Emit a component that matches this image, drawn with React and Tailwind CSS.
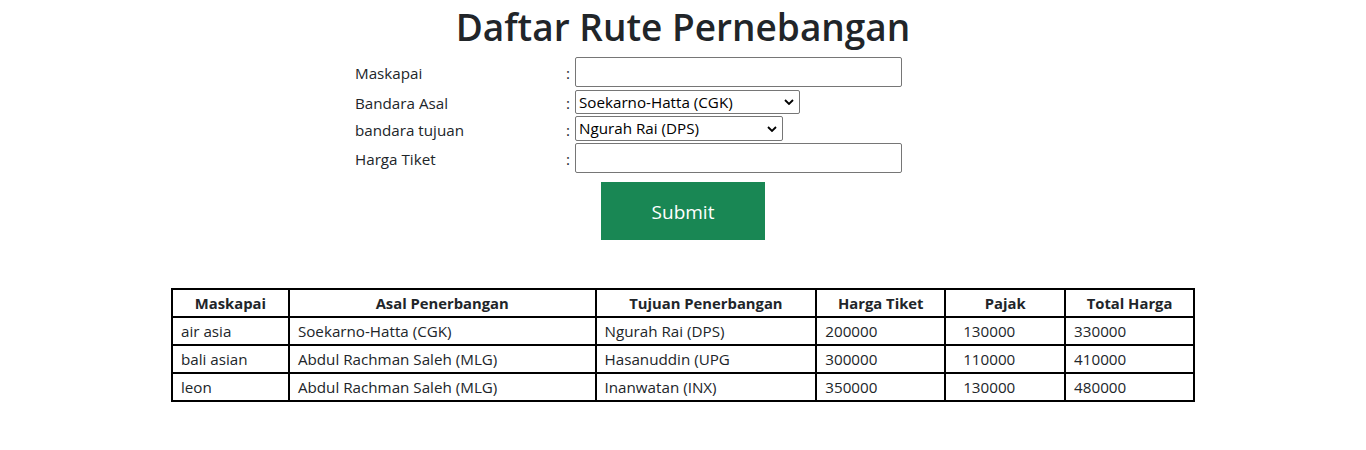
import React from 'react';

const rows = [
  ['air asia', 'Soekarno-Hatta (CGK)', 'Ngurah Rai (DPS)', '200000', '130000', '330000'],
  ['bali asian', 'Abdul Rachman Saleh (MLG)', 'Hasanuddin (UPG', '300000', '110000', '410000'],
  ['leon', 'Abdul Rachman Saleh (MLG)', 'Inanwatan (INX)', '350000', '130000', '480000'],
];

const heads = ['Maskapai', 'Asal Penerbangan', 'Tujuan Penerbangan', 'Harga Tiket', 'Pajak', 'Total Harga'];
const widths = ['w-[117px]', 'w-[307px]', 'w-[221px]', 'w-[129px]', 'w-[120px]', 'w-[129px]'];
const pads = ['pl-[8px]', 'pl-[8px]', 'pl-[8px]', 'pl-[8px]', 'pl-[17px]', 'pl-[8px]'];

function Chevron() {
  return (
    <svg className="pointer-events-none absolute right-[6px] top-1/2 -translate-y-1/2" width="10" height="7" viewBox="0 0 10 7">
      <path d="M1 1.5 L5 5.5 L9 1.5" fill="none" stroke="#000" strokeWidth="1.8" />
    </svg>
  );
}

function Select({ value, width }) {
  return (
    <div className={`relative ${width}`}>
      <select className="w-full h-full appearance-none border border-[#767676] rounded-[2px] bg-white pl-[3px] pr-6 text-[15.2px] text-black">
        <option>{value}</option>
      </select>
      <Chevron />
    </div>
  );
}

function Row({ label, children, h }) {
  return (
    <div className={`flex items-center ${h}`}>
      <span className="w-[211px] pt-[3px] text-[#212529]">{label}</span>
      <span className="w-[9px] pt-[3px] text-[#212529]">:</span>
      {children}
    </div>
  );
}

export default function App() {
  return (
    <div className="min-h-[450px] bg-white text-[15.2px] text-[#212529]" style={{ fontFamily: '"Open Sans", sans-serif' }}>
      <h1 className="text-center text-[37px] font-semibold leading-[48px] pt-[3px]">Daftar Rute Pernebangan</h1>

      <div className="pl-[355px] pt-[6px] flex flex-col gap-[2px]">
        <Row label="Maskapai" h="h-[30px]">
          <input className="w-[327px] h-[30px] border border-[#767676] rounded-[2px]" />
        </Row>
        <Row label="Bandara Asal" h="h-[25px]">
          <Select value="Soekarno-Hatta (CGK)" width="w-[225px] h-[24px]" />
        </Row>
        <Row label="bandara tujuan" h="h-[25px]">
          <Select value="Ngurah Rai (DPS)" width="w-[208px] h-[25px]" />
        </Row>
        <Row label="Harga Tiket" h="h-[30px]">
          <input className="w-[327px] h-[30px] border border-[#767676] rounded-[2px]" />
        </Row>
      </div>

      <div className="flex justify-center pt-[9px]">
        <button className="w-[164px] h-[58px] pt-[3px] bg-[#198754] text-white text-[19px]">Submit</button>
      </div>

      <div className="flex justify-center pt-[48px]">
        <table className="w-[1024px] border-collapse border-2 border-black">
          <thead>
            <tr className="h-[28px]">
              {heads.map((h, i) => (
                <th key={h} className={`${widths[i]} border-2 border-black text-center font-bold text-[14.8px] leading-[20px]`}>{h}</th>
              ))}
            </tr>
          </thead>
          <tbody>
            {rows.map((r) => (
              <tr key={r[0]} className="h-[28px]">
                {r.map((c, i) => (
                  <td key={i} className={`${pads[i]} border-2 border-black text-left leading-[20px]`}>{c}</td>
                ))}
              </tr>
            ))}
          </tbody>
        </table>
      </div>
    </div>
  );
}
